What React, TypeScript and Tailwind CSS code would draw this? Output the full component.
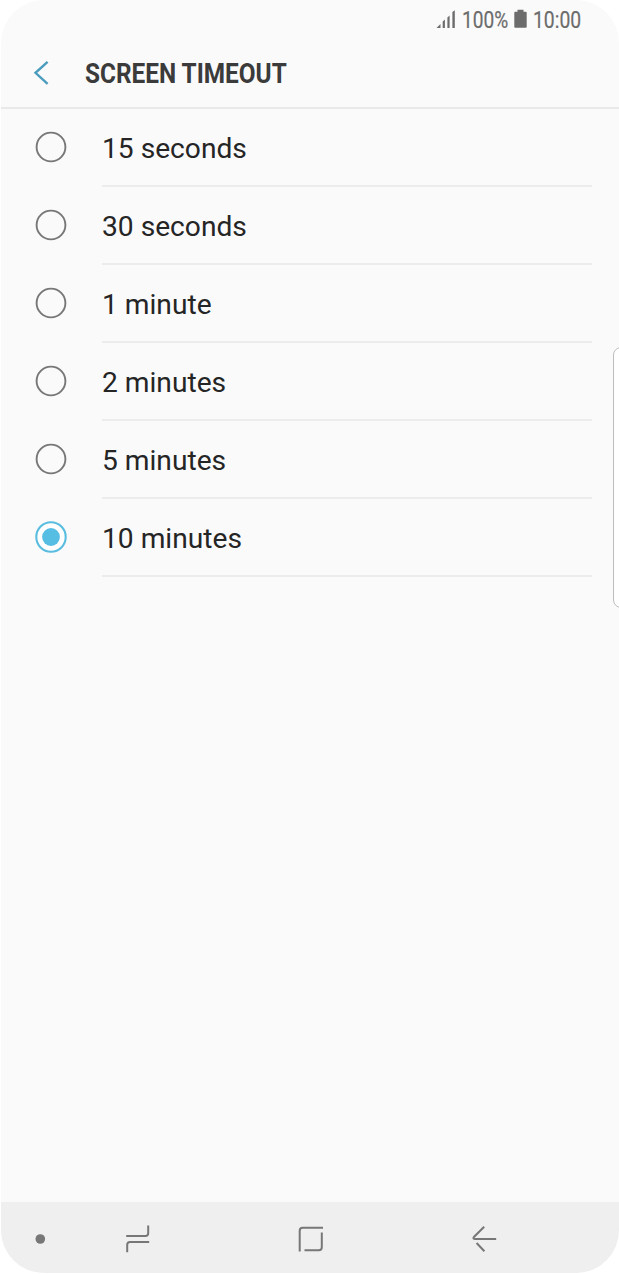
import { useState } from "react";

const options = ["15 seconds", "30 seconds", "1 minute", "2 minutes", "5 minutes", "10 minutes"];

function StatusBar() {
  return (
    <div className="flex h-[40px] shrink-0 items-start pt-[8px] text-[#6c6c6c]">
      <svg className="ml-[435px] mt-[2px] h-[18px] w-[20px] shrink-0" viewBox="0 0 20 18" fill="currentColor">
        <path d="M0.5 18 4.5 14V18ZM6.7 11.5 8.9 9.5V18H6.7ZM11.4 7.5 13.6 5.5V18H11.4ZM16.4 2 18.8 0.2V18H16.4Z" />
      </svg>
      <span className="ml-[6px] block w-[47px] origin-left scale-x-[0.83] whitespace-nowrap pt-px text-[23px] leading-[24px] [-webkit-text-stroke:0.2px_#6c6c6c]">100%</span>
      <svg className="ml-[5px] mt-[1px] h-[19px] w-[13px] shrink-0" viewBox="0 0 13 19" fill="currentColor">
        <path d="M3.5 0.8h6v2h2.2q1 0 1 1V18q0 .8-1 .8H1.2q-.9 0-.9-.8V3.8q0-1 .9-1h2.3Z" />
      </svg>
      <span className="ml-[6px] block origin-left scale-x-[0.84] whitespace-nowrap pt-px text-[23px] leading-[24px] [-webkit-text-stroke:0.2px_#6c6c6c]">10:00</span>
    </div>
  );
}

function NavBar() {
  return (
    <nav className="flex h-[71px] shrink-0 items-start bg-[#efefef] pt-[22px] text-[#777777]">
      <svg className="ml-[33px] h-[30px] w-[12px]" viewBox="0 0 12 30">
        <circle cx="6.3" cy="15" r="4.8" fill="currentColor" />
      </svg>
      <button className="ml-[76px] h-[30px] w-[30px]" aria-label="Recents">
        <svg viewBox="0 0 30 30" fill="none" stroke="currentColor" strokeWidth="2">
          <path d="M4.2 12H23.5Q26.2 12 26.2 9.3V1.5M27.2 18H8Q5.2 18 5.2 20.8V28.2" />
        </svg>
      </button>
      <button className="ml-[143px] h-[30px] w-[30px]" aria-label="Home">
        <svg viewBox="0 0 30 30" fill="none" stroke="currentColor" strokeWidth="2">
          <path d="M4.7 27.5V6.8Q4.7 3.8 7.7 3.8H28M26.8 8.6V23.2Q26.8 26.2 23.8 26.2H9.5" />
        </svg>
      </button>
      <button className="ml-[143px] h-[30px] w-[30px]" aria-label="Back">
        <svg viewBox="0 0 30 30" fill="none" stroke="currentColor" strokeWidth="2">
          <path d="M16.2 2.7 5.9 13Q4.6 14.8 6.7 15.1H28.2M8.6 19 16.4 27.2" />
        </svg>
      </button>
    </nav>
  );
}

export default function App() {
  const [selected, setSelected] = useState("10 minutes");
  return (
    <div className="h-[1274px] w-[619px] overflow-hidden bg-white pl-px font-['Roboto','Liberation_Sans',sans-serif]">
      <main className="relative flex h-[1273px] flex-col overflow-hidden rounded-[43px] bg-[#fafafa]">
        <StatusBar />
        <header className="flex h-[69px] shrink-0 items-start border-b-2 border-[#e9e9e9]">
          <svg className="mt-[20px] ml-[32px] h-[26px] w-[18px]" viewBox="0 0 18 26" fill="none" stroke="#4b9cbe" strokeWidth="2.4">
            <path d="M14.6 1.8 2.5 12.8 14.6 23.8" />
          </svg>
          <h1 className="mt-[18px] ml-[33.5px] origin-left scale-x-[0.87] whitespace-nowrap text-[28px] leading-[32px] font-bold text-[#3b3b3b]">SCREEN TIMEOUT</h1>
        </header>
        <ul className="flex flex-col">
          {options.map((name) => (
            <li key={name} className="flex h-[78px]">
              <button className="flex w-[101px] shrink-0 items-start pt-[22px] pl-[34px]" role="radio" aria-checked={selected === name} aria-label={name} onClick={() => setSelected(name)}>
                <svg className="size-[32px]" viewBox="0 0 32 32" fill="none">
                  {selected === name ? (
                    <>
                      <circle cx="16" cy="16" r="14.7" fill="white" stroke="#59bde0" strokeWidth="2.1" />
                      <circle cx="16" cy="16" r="8.9" fill="#56bde3" />
                    </>
                  ) : (
                    <circle cx="16" cy="16" r="14.4" stroke="#777777" strokeWidth="1.9" />
                  )}
                </svg>
              </button>
              <div className="h-[78px] w-[490px] border-b-2 border-[#ececec] pt-[24px]">
                <span className="block origin-left scale-x-[1.006] whitespace-nowrap text-[28px] leading-[32px] text-[#252525]">{name}</span>
              </div>
            </li>
          ))}
        </ul>
        <div className="flex-1" />
        <NavBar />
        <div className="absolute top-[347px] -right-[10px] h-[261px] w-[16px] rounded-[8px] border border-[#bdbdbd] bg-white" />
      </main>
    </div>
  );
}
